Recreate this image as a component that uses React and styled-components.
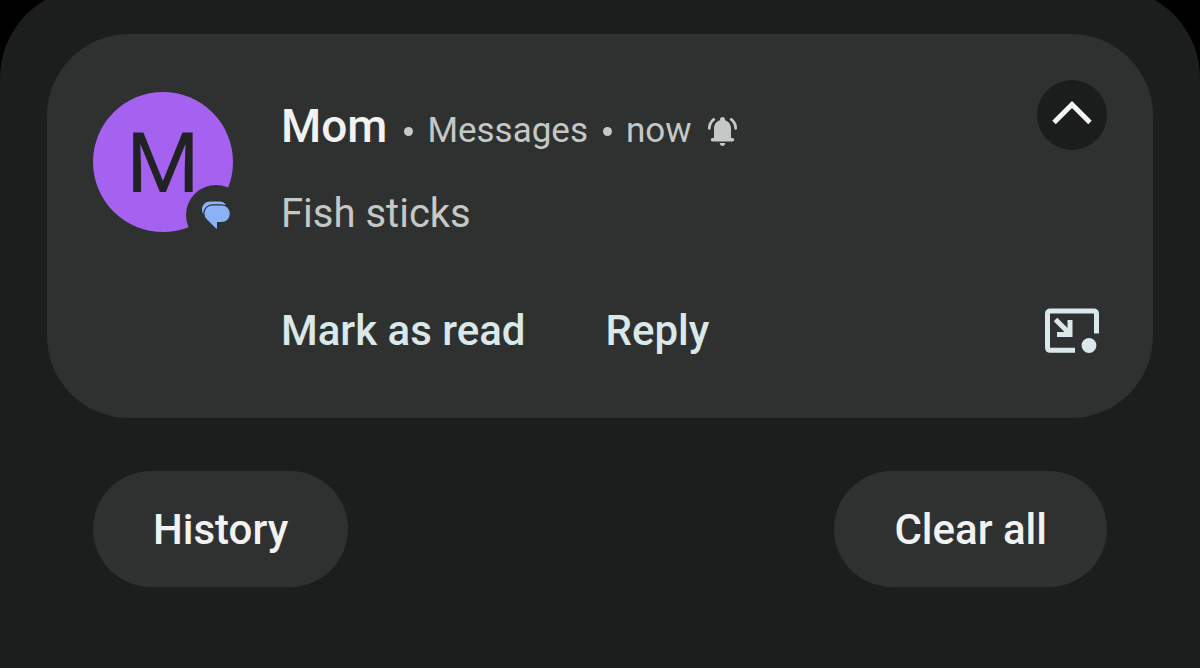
import React, { useState } from "react";
import styled, { createGlobalStyle } from "styled-components";

const GlobalStyle = createGlobalStyle`
  * {
    box-sizing: border-box;
  }

  body {
    margin: 0;
    background-color: #000;
    font-family: Roboto, "Liberation Sans", sans-serif;
  }

  svg {
    display: block;
  }
`;

const Screen = styled.div`
  display: flex;
  min-height: 100vh;
  overflow: hidden;
`;

const Shade = styled.main`
  flex: 1;
  margin-top: -12px;
  padding: 46px 47px 80px;
  border-radius: 90px 90px 0 0;
  background-color: #1c1e1d;
`;

const Card = styled.article`
  display: flex;
  align-items: flex-start;
  min-height: 384px;
  padding: 46px;
  border-radius: 82px;
  background-color: #2f3130;
`;

const Avatar = styled.div`
  position: relative;
  display: flex;
  align-items: center;
  justify-content: center;
  flex-shrink: 0;
  width: 140px;
  height: 140px;
  margin-top: 12px;
  padding-top: 4px;
  border-radius: 50%;
  background-color: #a561f0;
  color: #212224;
  font-size: 84px;
  line-height: 1;
`;

const AppBadge = styled.span`
  position: absolute;
  right: -13px;
  bottom: -13px;
  display: flex;
  align-items: center;
  justify-content: center;
  width: 60px;
  height: 60px;
  border-radius: 50%;
  background-color: #2f3130;
`;

const Content = styled.div`
  flex: 1;
  min-width: 0;
  margin-left: 46px;
`;

const TopLine = styled.div`
  display: flex;
  align-items: flex-start;
  justify-content: space-between;
`;

const Header = styled.header`
  display: flex;
  align-items: baseline;
  padding: 18px 0 0 2px;
  color: #c5c8c6;
  font-size: 35px;
  line-height: 56px;
`;

const Sender = styled.h1`
  margin: 0;
  padding-right: 2px;
  color: #f2f2f2;
  font-size: 46px;
  font-weight: 500;
  line-height: 56px;
`;

const Dot = styled.span`
  align-self: center;
  width: 9px;
  height: 9px;
  margin: 6px 14px 0 15px;
  border-radius: 50%;
  background-color: #c5c8c6;
`;

const BellWrap = styled.span`
  align-self: center;
  margin: 5px 0 0 15px;
`;

const CollapseButton = styled.button`
  display: flex;
  align-items: center;
  justify-content: center;
  width: 70px;
  height: 70px;
  padding: 0;
  border: none;
  border-radius: 50%;
  background-color: #1b1d1c;
  cursor: pointer;

  svg {
    transform: ${(props) => (props.$open ? "none" : "rotate(180deg)")};
  }
`;

const Message = styled.p`
  margin: 27px 0 0 2px;
  color: #c5c8c6;
  font-size: 40px;
  line-height: 56px;
`;

const Actions = styled.div`
  display: flex;
  align-items: center;
  gap: 80px;
  margin: 61px 8px 0 2px;
`;

const Action = styled.button`
  padding: 0;
  border: none;
  background: none;
  color: #dae8ea;
  font-family: inherit;
  font-size: 42px;
  font-weight: 500;
  line-height: 56px;
  cursor: pointer;
`;

const IconAction = styled(Action)`
  margin-left: auto;
`;

const Footer = styled.footer`
  display: flex;
  justify-content: space-between;
  padding: 53px 46px 0;
`;

const Pill = styled.button`
  height: 116px;
  padding: 0 60px;
  border: none;
  border-radius: 58px;
  background-color: #2f3130;
  color: #f2f2f2;
  font-family: inherit;
  font-size: 42px;
  font-weight: 500;
  cursor: pointer;
`;

const MessagesIcon = () => (
  <svg width="30" height="30" viewBox="0 0 30 30" aria-hidden="true">
    <path
      d="M9 1.4H18.5C21.6 1.4 24 3 25 5.4L20 12H6L2.6 14.6C1.4 12.8 1 11 1 9.2C1 4.8 4.6 1.4 9 1.4Z"
      fill="#8bb2f6"
    />
    <path
      d="M11.5 4.8H20.5C25.6 4.8 29.4 8.6 29.4 13.6C29.4 18.8 25.6 22.6 20.5 22.6H16.6V28C16.6 29.2 15.4 29.6 14.6 28.8L5.6 20C3.8 18.2 2.8 16 2.8 13.6C2.8 8.6 6.6 4.8 11.5 4.8Z"
      fill="#8bb2f6"
      stroke="#2f3130"
      strokeWidth="1.2"
    />
  </svg>
);

const BellIcon = () => (
  <svg width="31" height="31" viewBox="0 0 31 31" aria-hidden="true">
    <path
      d="M15.5 1C16.9 1 18 2 18 3.4V4.2C21.7 5.3 24 8.5 24 12.3V22H25.6Q27.2 22 27.2 23.8T25.6 25.6H5.4Q3.8 25.6 3.8 23.8T5.4 22H7V12.3C7 8.5 9.3 5.3 13 4.2V3.4C13 2 14.1 1 15.5 1Z"
      fill="#c5c8c6"
    />
    <path d="M12.8 27H18.2C18.2 28.8 17 30 15.5 30S12.8 28.8 12.8 27Z" fill="#c5c8c6" />
    <path
      d="M2.3 12.4C2.4 8.8 4 5.6 6.8 3.4M28.7 12.4C28.6 8.8 27 5.6 24.2 3.4"
      fill="none"
      stroke="#c5c8c6"
      strokeWidth="2.8"
      strokeLinecap="round"
    />
  </svg>
);

const ChevronIcon = () => (
  <svg width="46" height="46" viewBox="0 0 46 46" aria-hidden="true">
    <path d="M5 30.5L23 12.5L41 30.5" fill="none" stroke="#f4f5f4" strokeWidth="5" />
  </svg>
);

const BubbleIcon = () => (
  <svg width="54" height="46" viewBox="0 0 54 46" aria-hidden="true">
    <path
      d="M30 42.2H5.5Q2.5 42.2 2.5 39.2V6Q2.5 3 5.5 3H48.5Q51.5 3 51.5 6V25.5"
      fill="none"
      stroke="#dae8ea"
      strokeWidth="5"
    />
    <path
      d="M10.5 11.5L24.5 25.5M25 12V26.5H12"
      fill="none"
      stroke="#dae8ea"
      strokeWidth="5"
    />
    <circle cx="44" cy="37.5" r="7.4" fill="#dae8ea" />
  </svg>
);

const App = () => {
  const [open, setOpen] = useState(true);

  return (
    <>
      <GlobalStyle />
      <Screen>
        <Shade>
          <Card>
            <Avatar>
              M
              <AppBadge>
                <MessagesIcon />
              </AppBadge>
            </Avatar>
            <Content>
              <TopLine>
                <Header>
                  <Sender>Mom</Sender>
                  <Dot />
                  <span>Messages</span>
                  <Dot />
                  <span>now</span>
                  <BellWrap>
                    <BellIcon />
                  </BellWrap>
                </Header>
                <CollapseButton
                  type="button"
                  aria-label="Collapse"
                  aria-expanded={open}
                  $open={open}
                  onClick={() => setOpen(!open)}
                >
                  <ChevronIcon />
                </CollapseButton>
              </TopLine>
              <Message>Fish sticks</Message>
              {open && (
                <Actions>
                  <Action type="button">Mark as read</Action>
                  <Action type="button">Reply</Action>
                  <IconAction type="button" aria-label="Open as bubble">
                    <BubbleIcon />
                  </IconAction>
                </Actions>
              )}
            </Content>
          </Card>
          <Footer>
            <Pill type="button">History</Pill>
            <Pill type="button">Clear all</Pill>
          </Footer>
        </Shade>
      </Screen>
    </>
  );
};

export default App;
